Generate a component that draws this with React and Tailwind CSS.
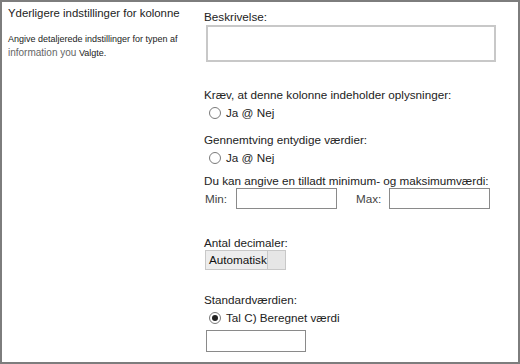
function Radio({ checked }) {
  return (
    <span className="w-[12px] h-[12px] rounded-full border border-[#7a7a7a] bg-white flex items-center justify-center shrink-0">
      {checked && <span className="w-[6px] h-[6px] rounded-full bg-[#222]" />}
    </span>
  )
}

function Label({ children, className = '' }) {
  return <div className={`text-[11.7px] leading-[14px] text-[#222] ${className}`}>{children}</div>
}

export default function App() {
  return (
    <div
      className="w-[520px] h-[364px] bg-white border-2 border-[#7d7d7d] flex overflow-hidden"
      style={{ fontFamily: '"Liberation Sans", Arial, sans-serif' }}
    >
      {/* Left: section title and help */}
      <div className="w-[200px] shrink-0 pl-[6px] pt-[4px]">
        <div className="text-[11.4px] leading-[15px] text-[#222]">Yderligere indstillinger for kolonne</div>
        <div className="mt-[12px] text-[9px] leading-[13px] text-[#222]">
          Angive detaljerede indstillinger for typen af
          <br />
          <span className="text-[10px] text-[#666]">information you</span> Valgte.
        </div>
      </div>

      {/* Right: form fields */}
      <div className="flex-1 flex flex-col pt-[8px] pl-[2px]">
        <Label>Beskrivelse:</Label>
        <div className="mt-[1px] ml-[2px] w-[290px] h-[37px] border-2 border-[#c8c8c8]" />

        <Label className="mt-[26px]">Kræv, at denne kolonne indeholder oplysninger:</Label>
        <div className="mt-[4px] ml-[5px] flex items-center gap-[5px] text-[11.7px] leading-[14px] text-[#222]">
          <Radio />
          <span>Ja @ Nej</span>
        </div>

        <Label className="mt-[13px]">Gennemtving entydige værdier:</Label>
        <div className="mt-[4px] ml-[5px] flex items-center gap-[5px] text-[11.7px] leading-[14px] text-[#222]">
          <Radio />
          <span>Ja @ Nej</span>
        </div>

        <Label className="mt-[9px]">Du kan angive en tilladt minimum- og maksimumværdi:</Label>
        <div className="flex items-center text-[11.7px] text-[#444]">
          <span className="w-[32px] pl-[1px]">Min:</span>
          <div className="w-[101px] h-[21px] border border-[#8a8a8a]" />
          <span className="ml-[19px] w-[33px]">Max:</span>
          <div className="w-[101px] h-[21px] border border-[#8a8a8a]" />
        </div>

        <Label className="mt-[27px]">Antal decimaler:</Label>
        <div className="ml-[1px] w-[81px] h-[20px] flex border border-[#c8c8c8] bg-[#ededed]">
          <span className="flex-1 pl-[3px] text-[11.7px] leading-[18px] text-[#111]">Automatisk</span>
          <span className="w-[18px] border-l border-[#c8c8c8] bg-[#e6e6e6]" />
        </div>

        <Label className="mt-[23px]">Standardværdien:</Label>
        <div className="mt-[4px] ml-[5px] flex items-center gap-[5px] text-[11.7px] leading-[14px] text-[#222]">
          <Radio checked />
          <span>Tal C) Beregnet værdi</span>
        </div>
        <div className="mt-[5px] ml-[2px] w-[100px] h-[22px] border border-[#8a8a8a]" />
      </div>
    </div>
  )
}
